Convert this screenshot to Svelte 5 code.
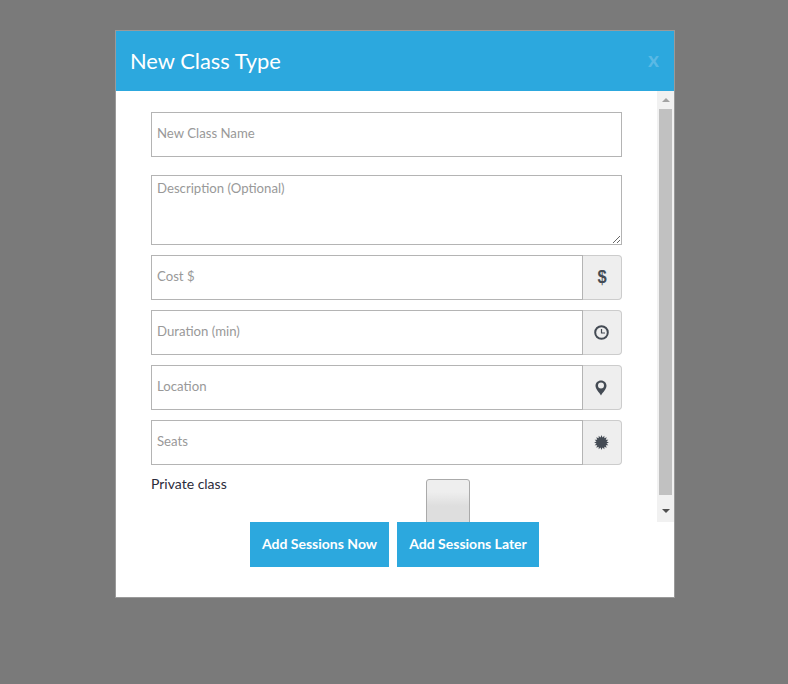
<script>
  const burst = (() => {
    const pts = [];
    const n = 16;
    for (let i = 0; i < n * 2; i++) {
      const r = i % 2 ? 5.1 : 7.4;
      const a = (Math.PI * i) / n;
      pts.push(`${(7.5 + r * Math.sin(a)).toFixed(2)},${(7.5 - r * Math.cos(a)).toFixed(2)}`);
    }
    return pts.join(' ');
  })();
</script>

<div class="modal">
  <header class="head">
    <h1>New Class Type</h1>
    <span class="close">x</span>
  </header>
  <div class="scroller">
    <form class="form">
      <input class="field name" placeholder="New Class Name" />
      <textarea class="field desc" placeholder="Description (Optional)"></textarea>
      <div class="group">
        <input class="field" placeholder="Cost $" />
        <span class="addon"><span class="dollar">$</span></span>
      </div>
      <div class="group">
        <input class="field" placeholder="Duration (min)" />
        <span class="addon">
          <svg width="15" height="15" viewBox="0 0 15 15" fill="none" stroke="#444b54" stroke-width="2">
            <circle cx="7.500" cy="7.500" r="6.300" />
            <path d="M7.500 4V8H11" stroke-width="1.200" />
          </svg>
        </span>
      </div>
      <div class="group">
        <input class="field" placeholder="Location" />
        <span class="addon">
          <svg width="12" height="16" viewBox="0 0 12 16">
            <path fill="#444b54" fill-rule="evenodd" d="M6 .5C2.800.5.500 2.800.500 5.800.500 9 4.200 12.500 6 15.500 7.800 12.500 11.500 9 11.500 5.800 11.500 2.800 9.200.5 6 .5ZM6 2.600A3 3 0 1 1 6 8.600 3 3 0 0 1 6 2.600Z" />
          </svg>
        </span>
      </div>
      <div class="group">
        <input class="field" placeholder="Seats" />
        <span class="addon">
          <svg width="15" height="15" viewBox="0 0 15 15"><polygon fill="#444b54" points={burst} /></svg>
        </span>
      </div>
      <div class="private">
        <span class="label">Private class</span>
        <span class="toggle"></span>
      </div>
    </form>
    <div class="scrollbar">
      <span class="arrow up"></span>
      <span class="thumb"></span>
      <span class="arrow down"></span>
    </div>
  </div>
  <footer class="foot">
    <button type="button">Add Sessions Now</button>
    <button type="button" class="later">Add Sessions Later</button>
  </footer>
</div>

<style>
  :global(body) {
    background: #7a7a7a;
  }
  .modal {
    box-sizing: border-box;
    width: 560px;
    height: 568px;
    margin: 30px 0 0 115px;
    background: #fff;
    border: 1px solid #9a9a9a;
    display: flex;
    flex-direction: column;
  }
  .head {
    height: 60px;
    flex: none;
    background: #2ca8de;
    display: flex;
    align-items: center;
    justify-content: space-between;
    padding: 0 15px 2px 14px;
    box-sizing: border-box;
  }
  h1 {
    margin: 0;
    font: 400 21.9px "Lato", sans-serif;
    color: #fff;
  }
  .close {
    font: 700 21px "Lato", sans-serif;
    color: #5ab9e5;
    position: relative;
    top: -2px;
  }
  .scroller {
    height: 431px;
    flex: none;
    display: flex;
    overflow: hidden;
  }
  .form {
    width: 471px;
    margin-left: 35px;
    padding-top: 21px;
    display: flex;
    flex-direction: column;
  }
  .field {
    box-sizing: border-box;
    width: 100%;
    height: 45px;
    padding: 0 5px 3px;
    border: 1px solid #b4b4b4;
    border-radius: 0;
    background: #fff;
    font: 13.2px "Lato", sans-serif;
    color: #333;
    outline: none;
    display: block;
    margin: 0;
  }
  .field::placeholder {
    color: #999;
    opacity: 1;
  }
  .name {
    flex: none;
    margin-bottom: 18px;
  }
  .desc {
    flex: none;
    height: 70px;
    padding: 4px 5px;
    margin-bottom: 10px;
  }
  .group {
    display: flex;
    height: 45px;
    flex: none;
    margin-bottom: 10px;
  }
  .group .field {
    flex: 1;
    min-width: 0;
  }
  .addon {
    box-sizing: border-box;
    width: 39px;
    flex: none;
    padding-right: 2px;
    background: #eee;
    border: 1px solid #ccc;
    border-left: none;
    border-radius: 0 4px 4px 0;
    display: flex;
    align-items: center;
    justify-content: center;
  }
  .dollar {
    font: 700 18px "Liberation Sans", sans-serif;
    color: #444b54;
    margin-left: 2px;
    transform: scaleX(0.92);
  }
  .private {
    display: flex;
    flex: none;
    margin-top: 4px;
  }
  .label {
    font: 14px/20px "Lato", sans-serif;
    height: 20px;
    margin-top: -5px;
    color: #2b2b3a;
    width: 275px;
  }
  .toggle {
    box-sizing: border-box;
    display: block;
    width: 44px;
    height: 60px;
    flex: none;
    border: 1px solid #aaa;
    border-radius: 3px;
    background: linear-gradient(#eee 0, #eee 12px, #dedede 26px, #dedede 100%);
  }
  .scrollbar {
    width: 17px;
    height: 431px;
    margin-left: auto;
    background: #f1f1f1;
    flex: none;
    display: flex;
    flex-direction: column;
    align-items: center;
  }
  .thumb {
    width: 13px;
    height: 386px;
    margin-top: 7px;
    background: #c1c1c1;
  }
  .arrow {
    width: 0;
    height: 0;
    border-left: 4px solid transparent;
    border-right: 4px solid transparent;
  }
  .up {
    margin-top: 7px;
    border-bottom: 4px solid #a3a3a3;
  }
  .down {
    margin-top: 14px;
    border-top: 4px solid #505050;
  }
  .foot {
    display: flex;
    gap: 8px;
    padding-left: 134px;
  }
  button {
    height: 45px;
    width: 139px;
    border: none;
    background: #2ca8de;
    color: #fff;
    font: 700 14px "Lato", sans-serif;
    padding: 0 0 3px;
  }
  .later {
    width: 142px;
  }
</style>
